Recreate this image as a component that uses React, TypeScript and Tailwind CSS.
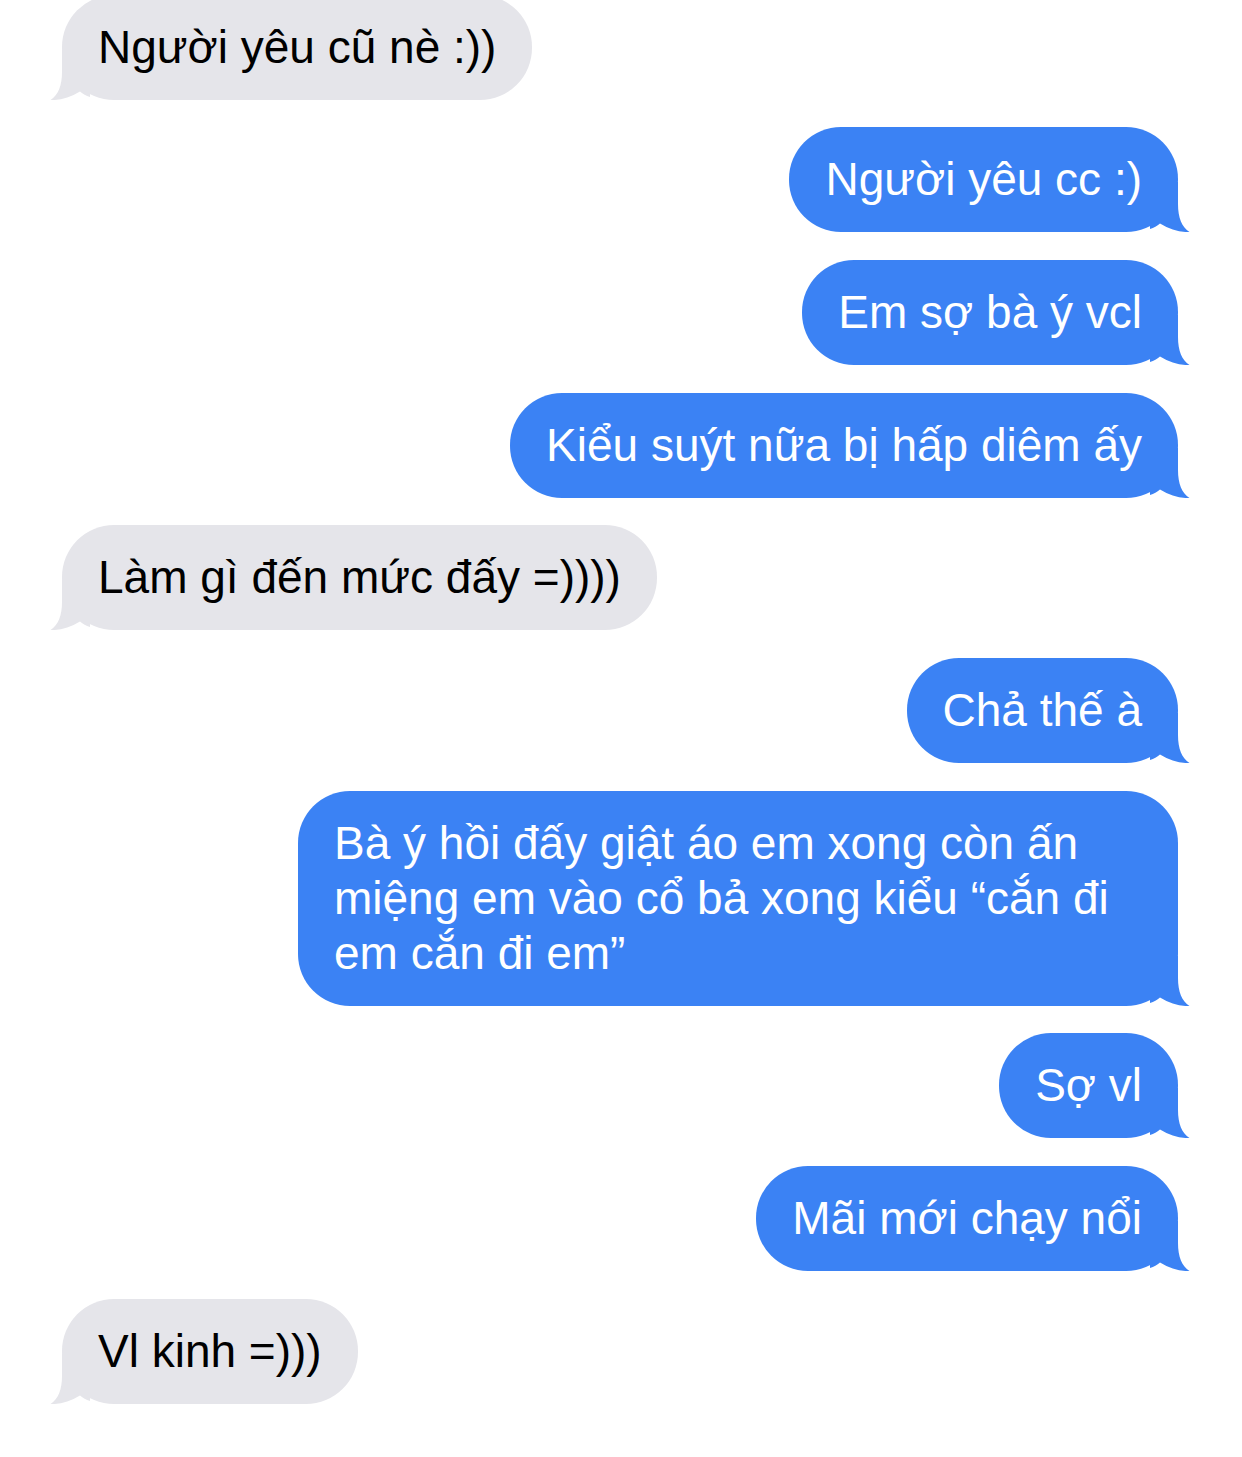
import type { ReactNode } from 'react';

type Message = {
  id: number;
  fromMe: boolean;
  lines: string[];
};

const messages: Message[] = [
  { id: 1, fromMe: false, lines: ['Người yêu cũ nè :))'] },
  { id: 2, fromMe: true, lines: ['Người yêu cc :)'] },
  { id: 3, fromMe: true, lines: ['Em sợ bà ý vcl'] },
  { id: 4, fromMe: true, lines: ['Kiểu suýt nữa bị hấp diêm ấy'] },
  { id: 5, fromMe: false, lines: ['Làm gì đến mức đấy =))))'] },
  { id: 6, fromMe: true, lines: ['Chả thế à'] },
  {
    id: 7,
    fromMe: true,
    lines: [
      'Bà ý hồi đấy giật áo em xong còn ấn',
      'miệng em vào cổ bả xong kiểu “cắn đi',
      'em cắn đi em”',
    ],
  },
  { id: 8, fromMe: true, lines: ['Sợ vl'] },
  { id: 9, fromMe: true, lines: ['Mãi mới chạy nổi'] },
  { id: 10, fromMe: false, lines: ['Vl kinh =)))'] },
];

// iOS style tail, drawn for the right side; flipped for received messages
function Tail({ fromMe }: { fromMe: boolean }) {
  return (
    <svg
      viewBox="0 0 40 50"
      className={`absolute bottom-0 w-[40px] h-[50px] ${
        fromMe ? 'right-[-12px] fill-[#3b82f4]' : 'left-[-12px] -scale-x-100 fill-[#e5e5ea]'
      }`}
    >
      <path d="M0 0 H28 V22 C28 36 32 45 39.5 50 C30 50.5 20 47.5 10 41.5 C7 44 4 46 0 47 Z" />
    </svg>
  );
}

function Bubble({
  fromMe,
  wrapped,
  children,
}: {
  fromMe: boolean;
  wrapped: boolean;
  children: ReactNode;
}) {
  return (
    <div className={`flex ${fromMe ? 'justify-end' : 'justify-start'}`}>
      <div
        className={`relative rounded-[52px] px-[36px] py-[25px] text-[46px] leading-[55px] whitespace-nowrap ${
          wrapped ? 'w-[880px]' : ''
        } ${fromMe ? 'bg-[#3b82f4] text-white' : 'bg-[#e5e5ea] text-black'}`}
      >
        <Tail fromMe={fromMe} />
        <span className="relative">{children}</span>
      </div>
    </div>
  );
}

export default function App() {
  return (
    <div
      className="min-h-[1457px] w-[1242px] overflow-hidden bg-white"
      style={{ fontFamily: '"Liberation Sans", Arial, sans-serif' }}
    >
      <div className="flex flex-col gap-[27.7px] pl-[62px] pr-[64px] mt-[-5.5px]">
        {messages.map((m) => (
          <Bubble key={m.id} fromMe={m.fromMe} wrapped={m.lines.length > 1}>
            {m.lines.map((line, i) => (
              <span key={i}>
                {line}
                {i < m.lines.length - 1 && <br />}
              </span>
            ))}
          </Bubble>
        ))}
      </div>
    </div>
  );
}
